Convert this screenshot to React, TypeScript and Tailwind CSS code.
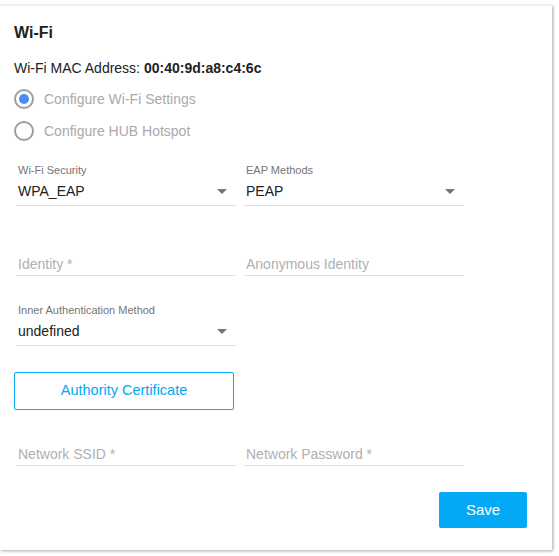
import React from "react"

const font = { fontFamily: '"Liberation Sans", Arial, sans-serif' }

function Radio({ checked, label }: { checked?: boolean; label: string }) {
  return (
    <div className="flex h-[32px] items-center">
      <span className="ml-[14px] flex h-[20px] w-[20px] items-center justify-center rounded-full border-2 border-[#9e9e9e]">
        {checked && <span className="h-[10px] w-[10px] rounded-full bg-[#4a8cf7]" />}
      </span>
      <span className="ml-[10px] text-[14px] text-[#aaaaaa]">{label}</span>
    </div>
  )
}

function Arrow() {
  return (
    <svg width="10" height="5" viewBox="0 0 10 5" className="mr-[9px]">
      <polygon points="0,0 10,0 5,5" fill="#757575" />
    </svg>
  )
}

function SelectField({ label, value }: { label: string; value: string }) {
  return (
    <div className="h-[43px]">
      <div className="h-[14px] pl-[2px] text-[11px] leading-[14px] text-[#757575]">{label}</div>
      <div className="flex h-[29px] items-center justify-between border-b border-[#e0e0e0] pl-[2px]">
        <span className="text-[14px] leading-[20px] text-[#212121]">{value}</span>
        <Arrow />
      </div>
    </div>
  )
}

function TextField({ placeholder }: { placeholder: string }) {
  return (
    <div className="h-[43px] pt-[14px]">
      <div className="flex h-[29px] items-center border-b border-[#e0e0e0] pl-[2px] pt-[5px]">
        <span className="text-[14px] leading-[20px] text-[#b0b0b0]">{placeholder}</span>
      </div>
    </div>
  )
}

export default function App() {
  return (
    <div className="min-h-screen bg-white pt-[5px]" style={font}>
      <div className="h-[545px] w-[552px] bg-white shadow-[1px_1px_3px_rgba(0,0,0,0.35)] border-t border-[#eeeeee] flex flex-col">
        <div className="pl-[14px] pt-[17px] text-[16px] font-bold leading-[20px] text-[#212121]">Wi-Fi</div>
        <div className="mt-[15px] pl-[14px] text-[14px] leading-[20px] text-[#212121]">
          Wi-Fi MAC Address: <span className="font-bold">00:40:9d:a8:c4:6c</span>
        </div>

        <div className="mt-[5px]">
          <Radio checked label="Configure Wi-Fi Settings" />
          <Radio label="Configure HUB Hotspot" />
        </div>

        <div className="mt-[16px] ml-[16px] grid w-[448px] grid-cols-2 gap-x-[8px] gap-y-[27px]">
          <SelectField label="Wi-Fi Security" value="WPA_EAP" />
          <SelectField label="EAP Methods" value="PEAP" />
          <TextField placeholder="Identity *" />
          <TextField placeholder="Anonymous Identity" />
          <SelectField label="Inner Authentication Method" value="undefined" />
          <div />
        </div>

        <button className="mt-[26px] ml-[14px] h-[38px] w-[220px] rounded-[2px] border border-[#03a9f4] text-[14.5px] text-[#03a9f4]">
          Authority Certificate
        </button>

        <div className="mt-[13px] ml-[16px] grid w-[448px] grid-cols-2 gap-x-[8px]">
          <TextField placeholder="Network SSID *" />
          <TextField placeholder="Network Password *" />
        </div>

        <div className="mt-[26px] flex justify-end pr-[25px]">
          <button className="h-[36px] w-[88px] rounded-[2px] bg-[#03a9f4] text-[15px] font-medium text-white">
            Save
          </button>
        </div>
      </div>
    </div>
  )
}
